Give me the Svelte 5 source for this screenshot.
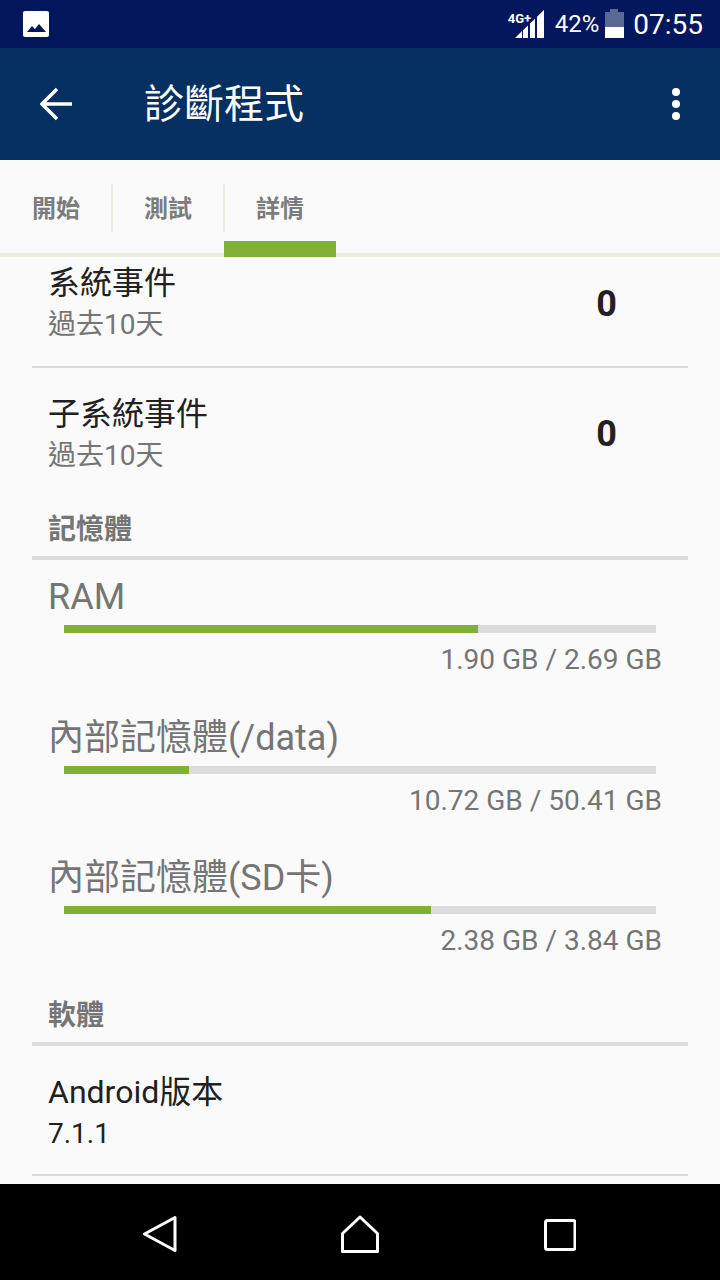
<script>
  const memory = [
    { name: 'RAM', used: 70, value: '1.90 GB / 2.69 GB' },
    { name: '內部記憶體(/data)', used: 21.1, value: '10.72 GB / 50.41 GB' },
    { name: '內部記憶體(SD卡)', used: 62, value: '2.38 GB / 3.84 GB' }
  ];
  const events = [
    { name: '系統事件', count: 0 },
    { name: '子系統事件', count: 0 }
  ];
</script>

<div class="screen">
  <div class="status">
    <svg class="pic" width="26" height="26" viewBox="0 0 26 26">
      <rect x="0" y="0" width="26" height="26" rx="2" fill="#fff" />
      <path d="M4 21 L9 15 L12 18 L16 13 L23 21 Z" fill="#05175c" />
    </svg>
    <div class="status-right">
      <span class="net">4G+</span>
      <svg class="signal" width="29" height="28" viewBox="0 0 29 28">
        <path d="M0 28 L7 21 V28 Z M8 28 V20.3 L13 15.4 V28 Z M15 28 V13.5 L20 8.7 V28 Z M22 28 V6.8 L29 0 V28 Z" fill="#fff" />
      </svg>
      <span class="pct">42%</span>
      <svg class="batt" width="20" height="30" viewBox="0 0 20 30">
        <path d="M5 0 H13 V3 H19 V29 H0 V3 H5 Z" fill="#fff" fill-opacity="0.35" />
        <rect x="0" y="18" width="19" height="11" fill="#fff" />
      </svg>
      <span class="time">07:55</span>
    </div>
  </div>

  <div class="toolbar">
    <svg class="back" width="34" height="34" viewBox="0 0 34 34">
      <path d="M32 17 H3 M17 2 L2 17 L17 32" fill="none" stroke="#fff" stroke-width="3.4" />
    </svg>
    <div class="title">診斷程式</div>
    <div class="dots"><i></i><i></i><i></i></div>
  </div>

  <div class="tabs">
    <div class="tab"><span>開始</span></div>
    <div class="tab"><span>測試</span></div>
    <div class="tab active"><span>詳情</span></div>
  </div>

  <div class="content">
    {#each events as ev, i}
      <div class="event" class:first={i === 0}>
        <div>
          <div class="ev-name">{ev.name}</div>
          <div class="ev-sub">過去10天</div>
        </div>
        <div class="ev-count">{ev.count}</div>
      </div>
    {/each}

    <div class="section">記憶體</div>
    {#each memory as m}
      <div class="mem">
        <div class="mem-name">{m.name}</div>
        <div class="track"><div class="fill" style="width: {m.used}%"></div></div>
        <div class="mem-value">{m.value}</div>
      </div>
    {/each}

    <div class="section soft">軟體</div>
    <div class="info">
      <div class="info-name">Android版本</div>
      <div class="info-value">7.1.1</div>
    </div>
  </div>

  <div class="nav">
    <svg width="40" height="40" viewBox="0 0 40 40">
      <path d="M35 2.5 V35.5 L4.5 19 Z" fill="none" stroke="#fff" stroke-width="3" stroke-linejoin="round" />
    </svg>
    <svg width="40" height="42" viewBox="0 0 40 42">
      <path d="M20 3 L37.5 19.5 V37.5 H2.5 V19.5 Z" fill="none" stroke="#fff" stroke-width="3" stroke-linejoin="round" />
    </svg>
    <svg width="32" height="34" viewBox="0 0 32 34">
      <rect x="1.5" y="2.5" width="29.5" height="29" rx="2" fill="none" stroke="#fff" stroke-width="3" />
    </svg>
  </div>
</div>

<style>
  :global(body) {
    margin: 0;
    background: #fafafa;
  }

  .screen {
    width: 720px;
    height: 1280px;
    display: flex;
    flex-direction: column;
    overflow: hidden;
    font-family: Roboto, "Noto Sans CJK TC", sans-serif;
    background: #fafafa;
  }

  .status {
    height: 48px;
    flex: none;
    background: #05175c;
    color: #fff;
    display: flex;
    align-items: center;
    justify-content: space-between;
    padding: 0 17px 0 23px;
  }

  .status-right {
    display: flex;
    align-items: center;
    position: relative;
  }

  .net {
    position: absolute;
    left: -7px;
    top: 3px;
    font-size: 13px;
    line-height: 16px;
    font-weight: 700;
  }

  .pct {
    font-size: 24px;
    margin-left: 11px;
  }

  .batt {
    margin: 0 8px 0 6px;
  }

  .time {
    font-size: 28px;
  }

  .toolbar {
    height: 112px;
    flex: none;
    background: #063062;
    color: #fff;
    display: flex;
    align-items: center;
    padding: 0 40px;
  }

  .title {
    font-size: 40px;
    line-height: 52px;
    margin: 2px 0 0 70px;
    flex: 1;
  }

  .dots {
    display: flex;
    flex-direction: column;
    gap: 4px;
  }

  .dots i {
    width: 8px;
    height: 8px;
    border-radius: 50%;
    background: #fff;
  }

  .tabs {
    height: 97px;
    flex: none;
    box-sizing: border-box;
    display: flex;
    border-bottom: 4px solid #e9f0dc;
  }

  .tab {
    width: 112px;
    height: 97px;
    box-sizing: border-box;
    display: flex;
    justify-content: center;
    position: relative;
    color: #7c7c7c;
    font-size: 24px;
    font-weight: 700;
    line-height: 98px;
  }

  .tab span {
    height: 96px;
  }

  .tab + .tab::before {
    content: "";
    position: absolute;
    left: -1px;
    top: 24px;
    width: 2px;
    height: 48px;
    background: #e9f0dc;
  }

  .tab.active::after {
    content: "";
    position: absolute;
    left: 0;
    right: 0;
    top: 81px;
    height: 16px;
    background: #80b036;
  }

  .content {
    flex: 1;
    overflow: hidden;
    padding: 0 32px;
  }

  .event {
    height: 128px;
    padding: 2px 16px 0;
    display: flex;
    justify-content: space-between;
    align-items: center;
  }

  .event.first {
    height: 93px;
    padding: 0 16px 16px;
    border-bottom: 2px solid #dcdcdc;
  }

  .ev-name {
    font-size: 32px;
    line-height: 42px;
    color: #212121;
  }

  .ev-sub {
    font-size: 28px;
    line-height: 40px;
    padding-top: 1px;
    color: #757575;
  }

  .ev-count {
    font-size: 36px;
    font-weight: 700;
    color: #212121;
    margin-right: 55px;
  }

  .section {
    height: 58px;
    line-height: 64px;
    padding: 0 16px;
    font-size: 28px;
    font-weight: 700;
    color: #757575;
    border-bottom: 4px solid #dcdcdc;
  }

  .soft {
    margin-top: 2.5px;
  }

  .mem {
    padding: 0 16px;
    height: 140.5px;
  }

  .mem-name {
    font-size: 36px;
    line-height: 44px;
    padding-top: 15px;
    color: #757575;
  }

  .track {
    height: 8px;
    margin: 6px 0 0 16px;
    width: 592px;
    background: #dcdcdc;
  }

  .fill {
    height: 100%;
    background: #80b036;
  }

  .mem-value {
    margin-top: 9px;
    text-align: right;
    padding-right: 10px;
    font-size: 28px;
    line-height: 36px;
    color: #757575;
  }

  .info {
    height: 128px;
    padding: 0 16px;
    border-bottom: 2px solid #dcdcdc;
  }

  .info-name {
    font-size: 32px;
    line-height: 44px;
    padding-top: 24px;
    color: #212121;
  }

  .info-value {
    font-size: 28px;
    line-height: 38px;
    padding-top: 1px;
    color: #212121;
  }

  .nav {
    height: 96px;
    flex: none;
    box-sizing: border-box;
    padding-top: 6px;
    background: #000;
    display: grid;
    grid-template-columns: repeat(3, 200px);
    justify-content: center;
    align-items: center;
    justify-items: center;
  }
</style>
